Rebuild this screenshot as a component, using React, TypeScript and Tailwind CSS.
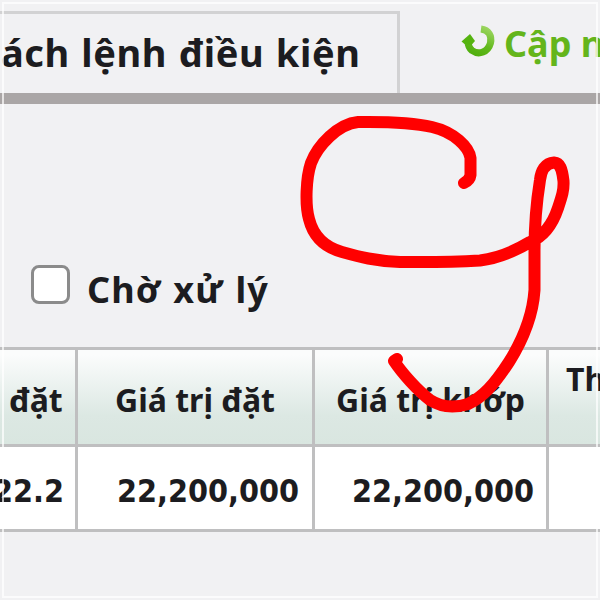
import { ReactNode } from 'react'

interface CellProps {
  children?: ReactNode
  className: string
}

const HeaderCell = ({ children, className }: CellProps) => (
  <div className={`h-[94px] shrink-0 overflow-hidden whitespace-nowrap bg-linear-to-b from-[#fbfcfc] from-5% via-[#dce8e3] via-70% to-[#d9e6e0] text-[32px] leading-[44px] ${className}`}>
    {children}
  </div>
)

const ValueCell = ({ children, className }: CellProps) => (
  <div className={`h-[82px] shrink-0 overflow-hidden whitespace-nowrap bg-white pt-[22px] text-right font-['DejaVu_Sans_Condensed','DejaVu_Sans',sans-serif] text-[32px] leading-[44px] font-stretch-condensed ${className}`}>
    {children}
  </div>
)

const RefreshIcon = () => (
  <svg className="mt-[23px] h-9 w-9 shrink-0" viewBox="0 0 36 36" fill="none">
    <defs>
      <linearGradient id="refresh" x1="26" y1="2" x2="12" y2="32" gradientUnits="userSpaceOnUse">
        <stop stopColor="#a3d968" />
        <stop offset="0.6" stopColor="#62b91d" />
        <stop offset="1" stopColor="#4fae0c" />
      </linearGradient>
    </defs>
    <path d="M20 6C28 7 31 13 29.500 20C27 29 18 32.500 11 27.500C8 25 7 22 7 18" stroke="url(#refresh)" strokeWidth="7" />
    <path d="M0.500 18.500L9 11L14 18L10.500 22L3.500 21Z" fill="#55b30f" />
  </svg>
)

export default function App() {
  return (
    <div className="relative h-[600px] w-[600px] overflow-hidden bg-[#f1f1f3] font-['Noto_Sans','Open_Sans',sans-serif] font-bold text-[#1c1c20]">
      {/* tabs */}
      <div className="flex h-[93px] pt-[11px]">
        <div className="h-[82px] w-[400px] shrink-0 overflow-hidden whitespace-nowrap border-r-[3px] border-t-[3px] border-[#d2d2d3] pt-[12px] text-[38px] leading-[52px] tracking-[0.6px] [word-spacing:1px]">
          <span className="ml-[1px]">ách lệnh điều kiện</span>
        </div>
        <div className="flex pl-[61px]">
          <div className="-mt-[11px]"><RefreshIcon /></div>
          <span className="ml-[7px] mt-[8px] whitespace-nowrap text-[36px] leading-[50px] text-[#64b51b]">Cập nhật</span>
        </div>
      </div>
      <div className="h-[11px] bg-[#aaa6a6]" />

      {/* filter */}
      <div className="flex h-[243px] pl-[31px] pt-[161px]">
        <div className="h-[39px] w-[39px] shrink-0 rounded-[8px] border-[3px] border-[#8b8b8b] bg-white" />
        <span className="ml-[17px] whitespace-nowrap text-[36px] leading-[50px] tracking-[1.1px] [word-spacing:1.500px]">Chờ xử lý</span>
      </div>

      {/* orders */}
      <div className="flex border-y-[3px] border-[#bfbfc0]">
        <div className="w-[78px] shrink-0 border-r-[3px] border-[#bfbfc0]">
          <HeaderCell className="pl-[9px] pt-[28px]">đặt</HeaderCell>
          <div className="h-[3px] bg-[#bfbfc0]" />
          <ValueCell className="flex justify-end pr-[11px]">22.2</ValueCell>
        </div>
        <div className="w-[237px] shrink-0 border-r-[3px] border-[#bfbfc0]">
          <HeaderCell className="pt-[28px] text-center">Giá trị đặt</HeaderCell>
          <div className="h-[3px] bg-[#bfbfc0]" />
          <ValueCell className="pr-[13px]">22,200,000</ValueCell>
        </div>
        <div className="w-[234px] shrink-0 border-r-[3px] border-[#bfbfc0]">
          <HeaderCell className="pt-[28px] text-center">Giá trị khớp</HeaderCell>
          <div className="h-[3px] bg-[#bfbfc0]" />
          <ValueCell className="pr-[12px]">22,200,000</ValueCell>
        </div>
        <div className="w-[51px] shrink-0">
          <HeaderCell className="pl-[17px] pt-[7px]">Th</HeaderCell>
          <div className="h-[3px] bg-[#bfbfc0]" />
          <ValueCell className="" />
        </div>
      </div>

      {/* outer frame */}
      <div className="pointer-events-none absolute inset-[2px] border-2 border-white/70" />

      {/* pen stroke */}
      <svg className="pointer-events-none absolute inset-0" width="600" height="600" viewBox="0 0 600 600" fill="none">
        <path
          d="M464 183C468 181 470 179 470.500 175V158C469 147 454 132 432 127C415 123 394 121.500 358 122C338 124 318 145 311 163C306 178 305 205 309 219C313 235 324 247 342 252C360 257 375 261 400 262C440 262.500 455 262 480 260.500C500 258 515 251 530 242C545 236 553 223 558 208C562 196 564 190 563.500 181C562 168 560 163 554 162.500C545 163 541 171 540 180C536 205 534.500 230 534.500 250V290C533 313 524 338 509 362C494 385 483 397 468 404C455 408 441 407 430 400C417 390 402 373 394 361L397 359"
          stroke="#ff0000"
          strokeWidth="12"
          strokeLinecap="round"
          strokeLinejoin="round"
        />
      </svg>
    </div>
  )
}
